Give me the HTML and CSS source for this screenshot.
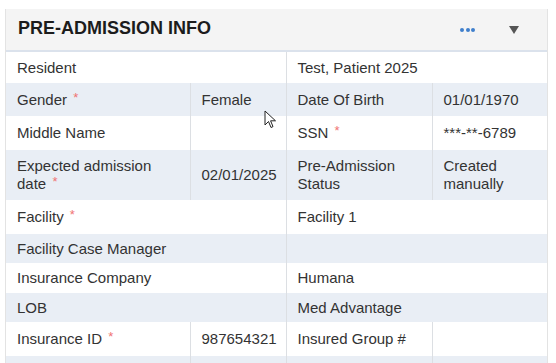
FILE: index.html
```html
<!DOCTYPE html>
<html lang="en">

<head>
    <meta charset="UTF-8">
    <meta name="viewport" content="width=device-width, initial-scale=1.0">
    <title>Pre-Admission Info</title>
    <link rel="stylesheet" href="styles.css">
</head>

<body>
    <div class="panel">
        <div class="panel-header">
            <h2 class="panel-title">PRE-ADMISSION INFO</h2>
            <div class="panel-tools">
                <span class="dots"><i></i><i></i><i></i></span>
                <span class="caret"></span>
            </div>
        </div>

        <table class="info">
            <colgroup>
                <col style="width: 184px">
                <col style="width: 96px">
                <col style="width: 146px">
                <col>
            </colgroup>
            <tr class="h31">
                <td colspan="2">Resident</td>
                <td colspan="2">Test, Patient 2025</td>
            </tr>
            <tr class="h33 alt">
                <td>Gender <span class="req">*</span></td>
                <td>Female</td>
                <td>Date Of Birth</td>
                <td>01/01/1970</td>
            </tr>
            <tr class="h34">
                <td>Middle Name</td>
                <td></td>
                <td>SSN <span class="req">*</span></td>
                <td>***-**-6789</td>
            </tr>
            <tr class="h50 alt">
                <td>Expected admission<br>date <span class="req">*</span></td>
                <td>02/01/2025</td>
                <td>Pre-Admission Status</td>
                <td>Created manually</td>
            </tr>
            <tr class="h34">
                <td colspan="2">Facility <span class="req">*</span></td>
                <td colspan="2">Facility 1</td>
            </tr>
            <tr class="h29 alt">
                <td colspan="2">Facility Case Manager</td>
                <td colspan="2"></td>
            </tr>
            <tr class="h30">
                <td colspan="2">Insurance Company</td>
                <td colspan="2">Humana</td>
            </tr>
            <tr class="h29 alt">
                <td colspan="2">LOB</td>
                <td colspan="2">Med Advantage</td>
            </tr>
            <tr class="h34">
                <td>Insurance ID <span class="req">*</span></td>
                <td>987654321</td>
                <td>Insured Group #</td>
                <td></td>
            </tr>
            <tr class="h34 alt">
                <td></td>
                <td></td>
                <td></td>
                <td></td>
            </tr>
        </table>
    </div>

    <!-- mouse pointer captured in the screenshot -->
    <svg class="pointer" width="13" height="19" viewBox="0 0 13 19">
        <path d="M1 1 L1 15 L4.5 11.5 L7 17.5 L9 16.6 L6.6 10.8 L11.5 10.8 Z" fill="#fff" stroke="#222" stroke-width="1"/>
    </svg>
</body>

</html>
```

FILE: styles.css
```css
body {
    margin: 0;
    background-color: #fff;
    font-family: "Liberation Sans", Arial, sans-serif;
    color: #333;
}

.panel {
    width: 543px;
    margin: 9px 0 0 5px;
    border: 1px solid #e3e3e3;
    border-bottom: none;
    box-sizing: border-box;
}

.panel-header {
    height: 41px;
    background-color: #f4f4f4;
    border-bottom: 2px solid #dbe2ec;
    display: flex;
    align-items: center;
    justify-content: space-between;
    padding: 0 0 0 12px;
    margin-top: -1px;
}

.panel-title {
    margin: 0;
    padding-bottom: 4px;
    font-size: 18px;
    line-height: 22px;
    font-weight: bold;
    color: #1c1c1c;
}

.panel-tools {
    display: flex;
    align-items: center;
    gap: 34px;
    padding-right: 28px;
}

.dots {
    display: flex;
    gap: 1.5px;
}

.dots i {
    width: 4px;
    height: 4px;
    border-radius: 50%;
    background-color: #3f7fcc;
}

.caret {
    width: 0;
    height: 0;
    border-left: 5px solid transparent;
    border-right: 5px solid transparent;
    border-top: 8px solid #555;
}

.info {
    width: 100%;
    border-collapse: collapse;
    table-layout: fixed;
    font-size: 15px;
    line-height: 18px;
}

.info td {
    padding: 0 11px;
    vertical-align: middle;
    border-left: 1px solid #dcdfe3;
}

.info td:first-child {
    border-left: none;
}

.info tr.alt td {
    background-color: #e9eef5;
}

.h29 { height: 29px; }
.h30 { height: 30px; }
.h31 { height: 31px; }
.h33 { height: 33px; }
.h34 { height: 34px; }
.h50 { height: 50px; }

.req {
    color: #f07373;
    font-size: 13px;
    line-height: 10px;
    position: relative;
    top: -3px;
    margin-left: 2px;
}

.pointer {
    position: absolute;
    left: 264px;
    top: 110px;
}
```
